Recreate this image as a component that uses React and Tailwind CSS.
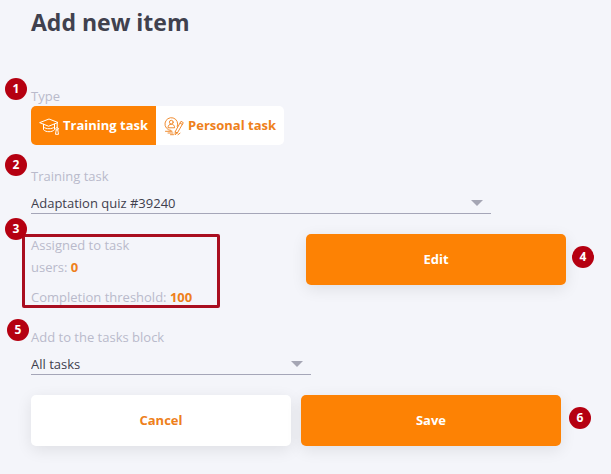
import { useState } from "react";

const TrainingIcon = () => (
  <svg className="w-5 h-5 shrink-0" viewBox="0 0 20 20" fill="none" stroke="currentColor" strokeWidth="1" strokeLinejoin="round" strokeLinecap="round" aria-hidden="true">
    <path d="M1 6.500 10 3l9 3.500-9 3.600z" />
    <path d="M4.500 8.200v1.500M15.500 8.200v1.500" />
    <path d="M4.500 9.700v4c1.500 1.500 3.300 2 5.500 2s4-.5 5.500-2v-4" />
    <path d="M4.500 11c1.500 1.300 3.300 1.700 5.500 1.700s4-.4 5.500-1.700" />
    <path d="M18.200 7v4.500" />
    <circle cx="18" cy="12.800" r="1.200" />
    <path d="M17.200 14l-.7 4.300h3L18.800 14" />
  </svg>
);

const PersonalIcon = () => (
  <svg className="w-5 h-5 shrink-0" viewBox="0 0 20 20" fill="none" stroke="currentColor" strokeWidth="0.9" strokeLinejoin="round" strokeLinecap="round" aria-hidden="true">
    <path d="M13.300 10.500A6.400 6.400 0 1 0 7 14.500" />
    <circle cx="7.300" cy="6.200" r="1.900" />
    <path d="M4 11.400c0-2 1.300-3.200 3.300-3.200s3.300 1.200 3.300 3.200z" />
    <path d="M17.300 5.500l2 1.200-6 10.300-2.300 1.700.3-2.900z" />
    <path d="M16.300 7.200l2 1.200M11.300 15.800l2 1.200" />
    <path d="M1.500 15.300h6.500M4 17h5M6.500 18.700h3M14 18.700l2-1.500" />
  </svg>
);

const Marker = ({ number, className }) => (
  <span className={`absolute z-10 flex h-[22px] w-[22px] items-center justify-center rounded-full bg-[#b50011] text-xs font-bold text-white ${className}`}>
    {number}
  </span>
);

const SelectField = ({ id, label, options, className }) => (
  <div className={className}>
    <label htmlFor={id} className="block leading-5 text-[#b9bacb]">{label}</label>
    <div className="relative mt-1.5">
      <select
        id={id}
        className="block h-[22px] w-full appearance-none border-b border-[#a5a6b8] bg-transparent pr-8 leading-5 text-[#3f404d] outline-none"
      >
        {options.map((option) => (
          <option key={option}>{option}</option>
        ))}
      </select>
      <svg className="pointer-events-none absolute right-2 top-2 h-1.5 w-3 text-[#a5a6b4]" viewBox="0 0 12 6" fill="currentColor" aria-hidden="true">
        <path d="M0 0h12L6 6z" />
      </svg>
    </div>
  </div>
);

const taskTypes = [
  { value: "training", label: "Training task", icon: TrainingIcon },
  { value: "personal", label: "Personal task", icon: PersonalIcon },
];

const buttonBase = "h-[51px] rounded-[5px] font-bold shadow-[0_4px_16px_rgba(0,0,0,0.09)]";
const primary = "bg-[#fd8204] text-white";
const secondary = "bg-white text-[#ee801b]";

const App = () => {
  const [type, setType] = useState("training");

  return (
    <main className="min-h-screen bg-[#f4f5fa] pb-7 pl-[31px] pr-[45px] pt-1.5 font-['Open_Sans',sans-serif] text-[13px]">
      <h1 className="text-[23px] font-bold leading-8 text-[#40414e]">Add new item</h1>

      <form className="mt-12 max-w-[535px]" onSubmit={(e) => e.preventDefault()}>
        {/* Task type */}
        <fieldset className="relative">
          <Marker number={1} className="-left-[26px] -top-7" />
          <legend className="leading-5 text-[#b9bacb]">Type</legend>
          <div className="inline-flex overflow-hidden rounded-[5px] align-top">
            {taskTypes.map(({ value, label, icon: Icon }) => (
              <label
                key={value}
                className={`flex h-[39px] cursor-pointer items-center gap-1 px-2 font-bold ${type === value ? primary : secondary}`}
              >
                <input
                  type="radio"
                  name="type"
                  value={value}
                  checked={type === value}
                  onChange={() => setType(value)}
                  className="sr-only"
                />
                <Icon />
                {label}
              </label>
            ))}
          </div>
        </fieldset>

        <div className="relative mt-[21px]">
          <Marker number={2} className="-left-[26px] -top-3" />
          <SelectField
            id="training-task"
            label="Training task"
            options={["Adaptation quiz #39240"]}
            className="max-w-[460px]"
          />
        </div>

        {/* Assignment summary */}
        <div className="relative mt-5 flex items-start justify-between">
          <Marker number={3} className="-left-[26px] -top-4" />
          <div className="relative w-[189px] leading-[22px] text-[#b9bacb]">
            <div className="pointer-events-none absolute inset-y-0 -left-[9px] right-0 rounded-xs border-3 border-[#a90e20]" />
            <p>
              Assigned to task
              <br />
              users: <b className="text-[#ee801b]">0</b>
            </p>
            <p className="mt-2">
              Completion threshold: <b className="text-[#ee801b]">100</b>
            </p>
          </div>
          <div className="relative w-[260px]">
            <button type="button" className={`w-full ${buttonBase} ${primary}`}>Edit</button>
            <Marker number={4} className="left-full top-3 ml-1.5" />
          </div>
        </div>

        <div className="relative mt-[19px]">
          <Marker number={5} className="-left-6 -top-2" />
          <SelectField
            id="tasks-block"
            label="Add to the tasks block"
            options={["All tasks"]}
            className="max-w-[280px]"
          />
        </div>

        <div className="relative mt-5 flex max-w-[530px] gap-2.5">
          <button type="button" className={`flex-1 ${buttonBase} ${secondary}`}>Cancel</button>
          <button type="submit" className={`flex-1 ${buttonBase} ${primary}`}>Save</button>
          <Marker number={6} className="left-full top-3 ml-2" />
        </div>
      </form>
    </main>
  );
};

export default App;
